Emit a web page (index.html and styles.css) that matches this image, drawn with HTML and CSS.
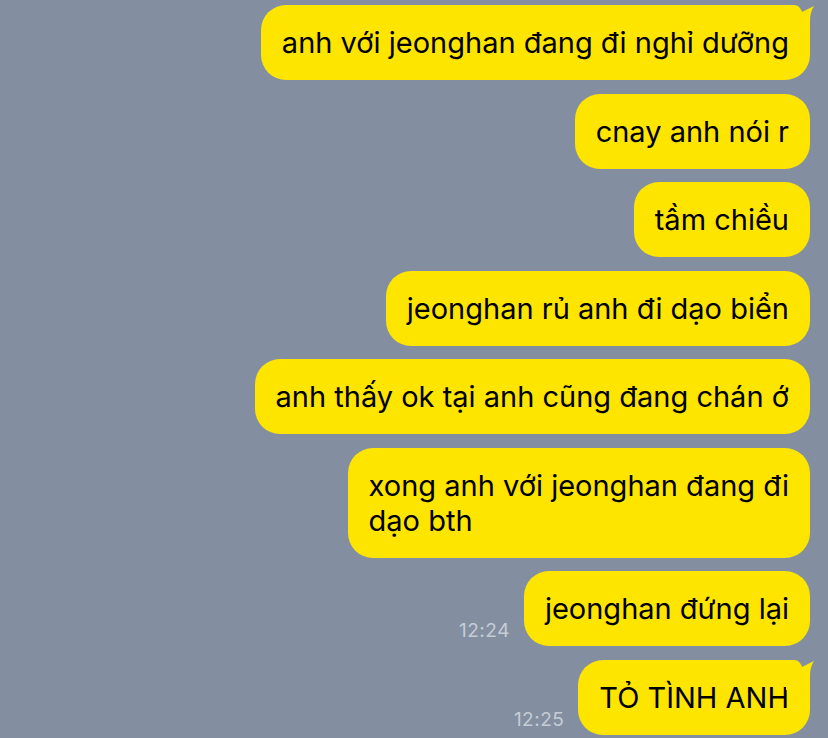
FILE: index.html
```html
<!DOCTYPE html>
<html lang="vi">
<head>
    <meta charset="UTF-8">
    <meta name="viewport" content="width=device-width, initial-scale=1.0">
    <title>Chat</title>
    <link rel="stylesheet" href="styles.css">
</head>
<body>
    <div class="chat">
        <div class="row">
            <div class="bubble tail">anh với jeonghan đang đi nghỉ dưỡng
                <svg class="tail-mark" width="32" height="30" viewBox="0 0 32 30"><path d="M0 0 H8 C13 0 15 4 16 7 C20 5 24 3 28 1 C25 6 24 10 24 16 V30 H0 Z"/></svg>
            </div>
        </div>
        <div class="row"><div class="bubble">cnay anh nói r</div></div>
        <div class="row"><div class="bubble">tầm chiều</div></div>
        <div class="row"><div class="bubble">jeonghan rủ anh đi dạo biển</div></div>
        <div class="row"><div class="bubble">anh thấy ok tại anh cũng đang chán ớ</div></div>
        <div class="row"><div class="bubble">xong anh với jeonghan đang đi<br>dạo bth</div></div>
        <div class="row">
            <span class="time">12:24</span>
            <div class="bubble">jeonghan đứng lại</div>
        </div>
        <div class="row">
            <span class="time">12:25</span>
            <div class="bubble tail">TỎ TÌNH ANH
                <svg class="tail-mark" width="32" height="30" viewBox="0 0 32 30"><path d="M0 0 H8 C13 0 15 4 16 7 C20 5 24 3 28 1 C25 6 24 10 24 16 V30 H0 Z"/></svg>
            </div>
        </div>
    </div>
</body>
</html>
```

FILE: styles.css
```css
body { margin: 0; background: #838fa1; font-family: Inter, "Noto Sans", sans-serif; height: 738px; overflow: hidden; }
.chat { display: flex; flex-direction: column; align-items: flex-end; gap: 13.5px; padding: 5px 18px 0 0; }
.row { display: flex; align-items: flex-end; gap: 14px; }
.bubble { position: relative; background: #fee500; color: #000; font-size: 29px; line-height: 35px; padding: 20px 21px; border-radius: 25px; white-space: nowrap; }
.tail-mark { position: absolute; top: 0; right: -8px; fill: #fee500; }
.time { color: #c6ccd6; font-size: 19px; line-height: 20px; margin-bottom: 5px; letter-spacing: 0.5px; }
```
